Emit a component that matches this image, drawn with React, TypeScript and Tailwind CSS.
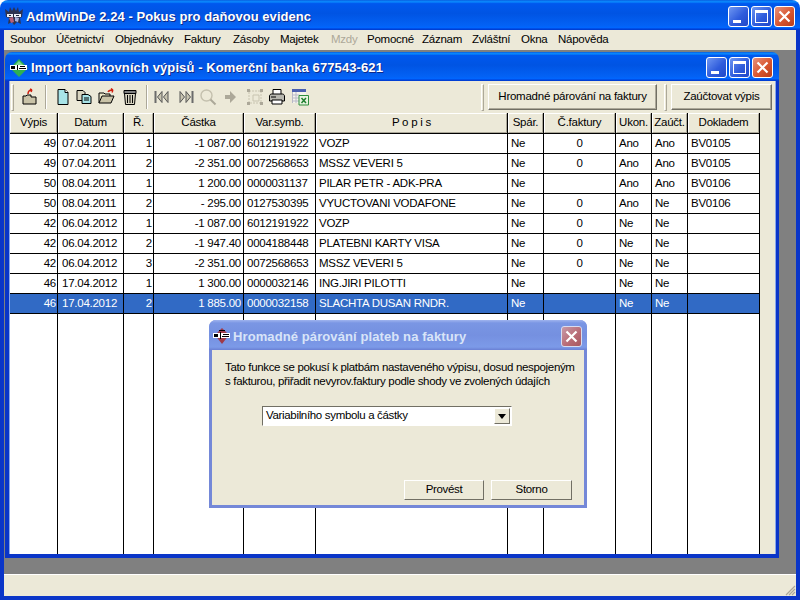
const LUNA = 'bg-[linear-gradient(180deg,#0a5fe0_0%,#0a8cff_6%,#0058ee_12%,#0054e3_45%,#0362f5_85%,#0066ff_92%,#0040d8_97%,#003dd0_100%)]';

const columns = [
  { title: 'Výpis', width: 'w-[48px]', align: 'text-right pr-[1px]' },
  { title: 'Datum', width: 'w-[66px]', align: 'text-left pl-[4px]' },
  { title: 'Ř.', width: 'w-[30px]', align: 'text-right pr-[1px]' },
  { title: 'Částka', width: 'w-[90px]', align: 'text-right pr-[2px]' },
  { title: 'Var.symb.', width: 'w-[72px]', align: 'text-left pl-[3px]' },
  { title: 'P o p i s', width: 'w-[192px]', align: 'text-left pl-[3px]' },
  { title: 'Spár.', width: 'w-[36px]', align: 'text-left pl-[3px]' },
  { title: 'Č.faktury', width: 'w-[72px]', align: 'text-center' },
  { title: 'Ukon.', width: 'w-[36px]', align: 'text-left pl-[3px]' },
  { title: 'Zaúčt.', width: 'w-[36px]', align: 'text-left pl-[3px]' },
  { title: 'Dokladem', width: 'w-[72px]', align: 'text-left pl-[3px]' },
];

const rows = [
  ['49', '07.04.2011', '1', '-1 087.00', '6012191922', 'VOZP', 'Ne', '0', 'Ano', 'Ano', 'BV0105'],
  ['49', '07.04.2011', '2', '-2 351.00', '0072568653', 'MSSZ VEVERI 5', 'Ne', '0', 'Ano', 'Ano', 'BV0105'],
  ['50', '08.04.2011', '1', '1 200.00', '0000031137', 'PILAR PETR - ADK-PRA', 'Ne', '', 'Ano', 'Ano', 'BV0106'],
  ['50', '08.04.2011', '2', '- 295.00', '0127530395', 'VYUCTOVANI VODAFONE', 'Ne', '0', 'Ano', 'Ne', 'BV0106'],
  ['42', '06.04.2012', '1', '-1 087.00', '6012191922', 'VOZP', 'Ne', '0', 'Ne', 'Ne', ''],
  ['42', '06.04.2012', '2', '-1 947.40', '0004188448', 'PLATEBNI KARTY VISA', 'Ne', '0', 'Ne', 'Ne', ''],
  ['42', '06.04.2012', '3', '-2 351.00', '0072568653', 'MSSZ VEVERI 5', 'Ne', '0', 'Ne', 'Ne', ''],
  ['46', '17.04.2012', '1', '1 300.00', '0000032146', 'ING.JIRI PILOTTI', 'Ne', '', 'Ne', 'Ne', ''],
  ['46', '17.04.2012', '2', '1 885.00', '0000032158', 'SLACHTA DUSAN RNDR.', 'Ne', '', 'Ne', 'Ne', ''],
];

const menu = [
  { label: 'Soubor', width: 'w-[46px]' },
  { label: 'Účetnictví', width: 'w-[59px]' },
  { label: 'Objednávky', width: 'w-[69px]' },
  { label: 'Faktury', width: 'w-[49px]' },
  { label: 'Zásoby', width: 'w-[47px]' },
  { label: 'Majetek', width: 'w-[51px]' },
  { label: 'Mzdy', width: 'w-[36px]', disabled: true },
  { label: 'Pomocné', width: 'w-[55px]' },
  { label: 'Záznam', width: 'w-[50px]' },
  { label: 'Zvláštní', width: 'w-[49px]' },
  { label: 'Okna', width: 'w-[37px]' },
  { label: 'Nápověda', width: 'w-[60px]' },
];

function CaptionButtons() {
  return (
    <div className="flex gap-[2px]">
      <div className="w-[21px] h-[21px] rounded-[3px] border border-white bg-[linear-gradient(135deg,#6f97f2,#2f5cdc_55%,#2148c8)] relative">
        <div className="absolute left-[4px] bottom-[3px] w-[8px] h-[3px] bg-white" />
      </div>
      <div className="w-[21px] h-[21px] rounded-[3px] border border-white bg-[linear-gradient(135deg,#6f97f2,#2f5cdc_55%,#2148c8)] relative">
        <div className="absolute left-[3px] top-[3px] w-[13px] h-[13px] border border-white border-t-[3px]" />
      </div>
      <CloseButton />
    </div>
  );
}

function CloseButton() {
  return (
    <div className="w-[21px] h-[21px] rounded-[3px] border border-white bg-[linear-gradient(135deg,#e8927c,#d8552f_55%,#b93d1c)] flex items-center justify-center">
      <svg width="13" height="13" viewBox="0 0 13 13">
        <path d="M1.5 1.5 L11.5 11.5 M11.5 1.5 L1.5 11.5" stroke="#fff" strokeWidth="2.2" />
      </svg>
    </div>
  );
}

function AppIcon() {
  return (
    <svg width="20" height="20" viewBox="0 0 20 20" className="shrink-0">
      <path d="M1 3l4 3 1-5 2 4 2-4 2 4 2-4 1 5 4-3-1 8-2 1 1 6-4-2-3 3-2-3-4 2 1-6-3-1z" fill="#2e3350" />
      <path d="M3 8h14v3H3z" fill="#eceef6" />
      <path d="M5 9h2v1H5zM9 8h1v3H9zM12 9h3v1h-3z" fill="#20243a" />
      <path d="M5 12l4-1 1 5-3 1z" fill="#b8607a" />
      <path d="M11 11l4 1-1 4-3-1z" fill="#a8b2dc" />
    </svg>
  );
}

function ImportIcon() {
  return (
    <svg width="20" height="20" viewBox="0 0 20 20" className="shrink-0">
      <path d="M10 1l9 9-9 9-9-9z" fill="#2fb050" />
      <path d="M10 3l6 6H4z" fill="#7fd890" />
      <path d="M1 7h17v5H1z" fill="#fff" />
      <path d="M2 8h4v3H2zM8 7h1v5H8zM11 8h5v1h-5zM10 10h7v1h-7z" fill="#000" />
    </svg>
  );
}

function DialogIcon() {
  return (
    <svg width="18" height="18" viewBox="0 0 18 18" className="shrink-0">
      <path d="M9 1l7 7-7 9-7-9z" fill="#a03a48" />
      <path d="M0 6h17v5H0z" fill="#fff" />
      <path d="M1 7h4v3H1zM7 5h1v7H7zM10 7h6v1h-6zM9 9h7v1H9zM6 3h6v1H6z" fill="#000" />
    </svg>
  );
}

function Grip() {
  return <div className="w-[3px] h-[27px] border border-t-white border-l-white border-r-[#aca899] border-b-[#aca899]" />;
}

function Separator() {
  return <div className="w-[2px] h-[24px] border-l border-l-[#aca899] border-r border-r-white" />;
}

function ToolIcon({ children, className }: { children: React.ReactNode; className: string }) {
  return (
    <svg width="18" height="18" viewBox="0 0 18 18" className={'shrink-0 ' + className}>
      {children}
    </svg>
  );
}

function Toolbar() {
  return (
    <div className="h-[32px] flex items-center bg-[#ece9d8] pl-[1px] shrink-0">
      <Grip />
      <ToolIcon className="ml-[7px]">
        <path d="M2 8h3l1-1h4v2h5v7H2z" fill="#c9c3a8" stroke="#000" />
        <path d="M7 6c0-3 2-4 4-4M11 2l-2-1M11 2l-1 2" fill="none" stroke="#d02010" strokeWidth="1.5" />
      </ToolIcon>
      <div className="ml-[6px]"><Separator /></div>
      <ToolIcon className="ml-[7px]">
        <path d="M4 1.5h7l3 3v12H4z" fill="#a8e4e8" stroke="#000" />
        <path d="M11 1.5v3h3" fill="#fff" stroke="#000" />
      </ToolIcon>
      <ToolIcon className="ml-[3px]">
        <path d="M2 2.5h6l2 2v8H2z" fill="#d8d4c0" stroke="#000" />
        <path d="M7 6.5h6l3 2v7H7z" fill="#a8e4e8" stroke="#000" />
        <path d="M9 10h5M9 12h5" stroke="#000" />
      </ToolIcon>
      <ToolIcon className="ml-[5px]">
        <path d="M1 15V5h5l1 1h5v2" fill="#e8e4c8" stroke="#000" />
        <path d="M1 15l3-7h12l-3 7z" fill="#c9c3a8" stroke="#000" />
        <path d="M10 4c1-2 3-2 5-2M15 2l-2-1.500M15 2l-1 2.500" fill="none" stroke="#d02010" strokeWidth="1.4" />
      </ToolIcon>
      <ToolIcon className="ml-[5px]">
        <path d="M3.500 5.500h11l-1 11h-9z" fill="#d8d4c0" stroke="#000" />
        <path d="M3 2.500h12v3H3z" fill="#808080" stroke="#000" />
        <path d="M6.500 7v8M9 7v8M11.500 7v8" stroke="#000" />
      </ToolIcon>
      <div className="ml-[7px]"><Separator /></div>
      <ToolIcon className="ml-[5px]">
        <path d="M2.500 3v12" stroke="#6b6b6b" strokeWidth="2" />
        <path d="M9 3.500L4.500 9 9 14.500zM15 3.500L10.500 9 15 14.500z" fill="#c8c4b0" stroke="#555" />
      </ToolIcon>
      <ToolIcon className="ml-[6px]">
        <path d="M15.500 3v12" stroke="#6b6b6b" strokeWidth="2" />
        <path d="M9 3.500L13.500 9 9 14.500zM3 3.500L7.500 9 3 14.500z" fill="#c8c4b0" stroke="#555" />
      </ToolIcon>
      <ToolIcon className="ml-[4px]">
        <circle cx="7.500" cy="7.500" r="5.500" fill="none" stroke="#c4c0ae" strokeWidth="1.400" />
        <path d="M11.500 11.500l5 5" stroke="#aca899" strokeWidth="2" />
      </ToolIcon>
      <ToolIcon className="ml-[5px]">
        <path d="M3 7h5V3l6 6-6 6v-4H3z" fill="#aca899" />
      </ToolIcon>
      <ToolIcon className="ml-[6px]">
        <path d="M3 3h12v12H3z" fill="none" stroke="#c8c4b0" strokeDasharray="2 1" />
        <path d="M1 1h3v3H1zM14 1h3v3h-3zM1 14h3v3H1zM14 14h3v3h-3z" fill="#aca899" />
        <path d="M7 7h6v6H7z" fill="none" stroke="#c8c4b0" />
      </ToolIcon>
      <ToolIcon className="ml-[4px]">
        <path d="M5 1.500h8v5H5z" fill="#fff" stroke="#000" />
        <path d="M1.500 8c0-1 1-2 2-2h11c1 0 2 1 2 2v5h-15z" fill="#b8b8b0" stroke="#000" />
        <path d="M4 12h10v4H4z" fill="#fff" stroke="#000" />
        <path d="M3 9h5" stroke="#000" />
      </ToolIcon>
      <ToolIcon className="ml-[5px]">
        <path d="M1 1h14v14H1z" fill="#f4f4ec" />
        <path d="M1 1h14v3H1z" fill="#4a5fb0" />
        <path d="M1.500 7h7M1.500 10h7M1.500 13h7M5 4v11M1.500 4v11" stroke="#b8b8c8" />
        <path d="M8 7.500h9.500v9.500H8z" fill="#e8f4e0" stroke="#2f8f3f" />
        <path d="M10.500 10l4.500 5M15 10l-4.500 5" stroke="#1f7f2f" strokeWidth="1.500" />
      </ToolIcon>
      <div className="ml-auto flex items-center">
        <Grip />
        <div className="ml-[4px] w-[169px] h-[26px] flex items-center justify-center bg-[#ece9d8] border border-t-white border-l-white border-r-[#716f64] border-b-[#716f64] shadow-[inset_-1px_-1px_#aca899]">Hromadné párování na faktury</div>
        <div className="ml-[7px]"><Grip /></div>
        <div className="ml-[4px] mr-[3px] w-[101px] h-[26px] flex items-center justify-center bg-[#ece9d8] border border-t-white border-l-white border-r-[#716f64] border-b-[#716f64] shadow-[inset_-1px_-1px_#aca899]">Zaúčtovat výpis</div>
      </div>
    </div>
  );
}

function Grid() {
  return (
    <div className="flex-1 min-h-0 flex flex-col bg-[#ece9d8]">
      <div className="flex h-[21px] shrink-0 w-[750px] border-b border-black">
        {columns.map((c) => (
          <div key={c.title} className={c.width + ' border-r border-black'}>
            <div className="h-full flex items-center justify-center border border-t-white border-l-white border-r-[#aca899] border-b-[#aca899] whitespace-nowrap">{c.title}</div>
          </div>
        ))}
      </div>
      <div className="flex-1 min-h-0 flex flex-col w-[750px] bg-white">
        {rows.map((row, i) => {
          const selected = i === rows.length - 1;
          return (
            <div key={i} className={'flex h-[20px] shrink-0 border-b border-black ' + (selected ? 'bg-[#316ac5] text-white' : '')}>
              {row.map((value, j) => (
                <div key={j} className={columns[j].width + ' ' + columns[j].align + ' border-r border-black leading-[19px] whitespace-nowrap'}>{value}</div>
              ))}
            </div>
          );
        })}
        <div className="flex flex-1 min-h-0">
          {columns.map((c) => (
            <div key={c.title} className={c.width + ' border-r border-black'} />
          ))}
        </div>
      </div>
    </div>
  );
}

function ChildWindow() {
  return (
    <div className="ml-[1px] mt-[2px] w-[774px] h-[506px] flex flex-col">
      <div className={'h-[29px] shrink-0 rounded-t-[7px] flex items-center pt-[2px] pl-[4px] pr-[6px] ' + LUNA}>
        <ImportIcon />
        <span className="ml-[2px] pt-[1px] text-white font-bold text-[13px] tracking-[0.1px] [text-shadow:1px_1px_#0f2a89]">Import bankovních výpisů - Komerční banka 677543-621</span>
        <div className="ml-auto"><CaptionButtons /></div>
      </div>
      <div className="flex-1 min-h-0 flex flex-col border-l-4 border-r-3 border-b-4 border-[#0a35c8]">
        <div className="flex-1 min-h-0 flex flex-col border-l border-r border-[#8aa8ea]">
          <Toolbar />
          <Grid />
        </div>
      </div>
    </div>
  );
}

function Dialog() {
  return (
    <div className="absolute left-[209px] top-[320px] w-[378px] h-[188px] flex flex-col rounded-t-[7px] bg-[#7488d8] tracking-[-0.33px]">
      <div className="h-[30px] shrink-0 rounded-t-[7px] flex items-center pt-[2px] pl-[4px] pr-[5px] bg-[linear-gradient(180deg,#a0b4ee_0%,#7a96e4_10%,#7590e0_50%,#7c9ae8_90%,#6a80d4_100%)]">
        <DialogIcon />
        <span className="ml-[2px] pt-[1px] text-[#d8e4f8] font-bold text-[13px] tracking-[0.1px]">Hromadné párování plateb na faktury</span>
        <div className="ml-auto w-[21px] h-[21px] rounded-[3px] border border-[#d8dcf0] bg-[linear-gradient(135deg,#c89aa8,#b86a74_60%,#a85860)] flex items-center justify-center">
          <svg width="13" height="13" viewBox="0 0 13 13">
            <path d="M1.500 1.500 L11.500 11.500 M11.500 1.500 L1.500 11.500" stroke="#fff" strokeWidth="2.200" />
          </svg>
        </div>
      </div>
      <div className="flex-1 min-h-0 mx-[3px] mb-[3px] bg-[#ece9d8] flex flex-col">
        <div className="mt-[10px] ml-[13px] leading-[14px] whitespace-nowrap">
          <div>Tato funkce se pokusí k platbám nastaveného výpisu, dosud nespojeným</div>
          <div>s fakturou, přiřadit nevyrov.faktury podle shody ve zvolených údajích</div>
        </div>
        <div className="mt-[18px] ml-[50px] w-[250px] h-[20px] bg-white flex items-center border border-t-[#716f64] border-l-[#716f64] border-r-white border-b-white">
          <span className="ml-[3px] whitespace-nowrap">Variabilního symbolu a částky</span>
          <div className="ml-auto mr-[1px] w-[16px] h-[16px] bg-[#ece9d8] border border-t-white border-l-white border-r-[#716f64] border-b-[#716f64] flex items-center justify-center">
            <svg width="8" height="5" viewBox="0 0 8 5"><path d="M0 0h8L4 5z" fill="#000" /></svg>
          </div>
        </div>
        <div className="mt-auto mb-[5px] flex justify-end gap-[7px] pr-[12px]">
          <div className="w-[80px] h-[20px] flex items-center justify-center border border-t-white border-l-white border-r-[#716f64] border-b-[#716f64]">Provést</div>
          <div className="w-[81px] h-[20px] flex items-center justify-center border border-t-white border-l-white border-r-[#716f64] border-b-[#716f64]">Storno</div>
        </div>
      </div>
    </div>
  );
}

export default function App() {
  return (
    <div className="relative w-[800px] h-[600px] flex flex-col bg-white text-black text-[11.5px] tracking-[-0.25px] font-['Liberation_Sans',sans-serif] overflow-hidden">
      <div className={'h-[30px] shrink-0 rounded-t-[8px] flex items-center pt-[2px] pl-[4px] pr-[5px] ' + LUNA}>
        <AppIcon />
        <span className="ml-[2px] pt-[1px] text-white font-bold text-[13px] tracking-[0.05px] [text-shadow:1px_1px_#0f2a89]">AdmWinDe 2.24 - Pokus pro daňovou evidenc</span>
        <div className="ml-auto"><CaptionButtons /></div>
      </div>
      <div className="flex-1 min-h-0 flex flex-col border-l-4 border-r-4 border-b-4 border-[#0a35c8]">
        <div className="h-[20px] shrink-0 flex items-center bg-[#ece9d8] pl-[6px]">
          {menu.map((m) => (
            <span key={m.label} className={m.width + ' whitespace-nowrap ' + (m.disabled ? 'text-[#aca899]' : '')}>{m.label}</span>
          ))}
        </div>
        <div className="flex-1 min-h-0 bg-[#808080] border-b border-b-white">
          <ChildWindow />
        </div>
        <div className="h-[21px] shrink-0 bg-[#ece9d8] relative">
          <svg width="12" height="12" viewBox="0 0 12 12" className="absolute right-0 bottom-0">
            <path d="M11 2L2 11M11 5L5 11M11 8L8 11" stroke="#aca899" strokeWidth="1.200" />
          </svg>
        </div>
      </div>
      <Dialog />
    </div>
  );
}
